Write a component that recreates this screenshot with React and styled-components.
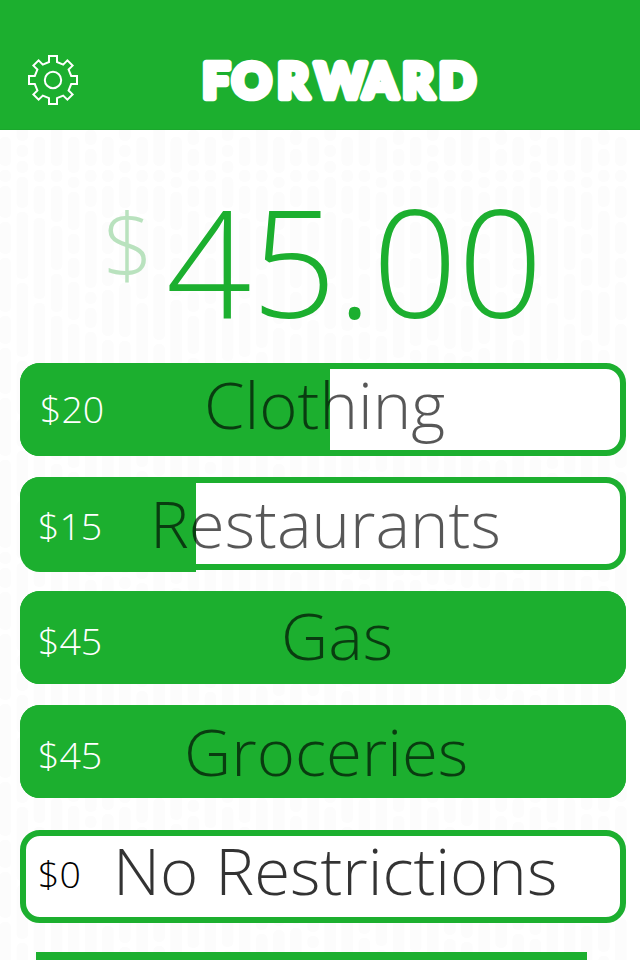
import React from "react";
import styled, { createGlobalStyle } from "styled-components";

const GREEN = "#1caf2f";

const Global = createGlobalStyle`
  * { box-sizing: border-box; }
  html, body { margin: 0; padding: 0; background: #fff; }
`;

const Screen = styled.main`
  position: relative;
  isolation: isolate;
  width: 640px;
  height: 960px;
  overflow: hidden;
  display: flex;
  flex-direction: column;
  font-family: "Open Sans", sans-serif;
  font-weight: 300;
`;

const Texture = styled.svg`
  position: absolute;
  inset: 0;
  z-index: -1;
`;

const Header = styled.header`
  flex: none;
  height: 130px;
  padding: 30px 0 0 28px;
  display: flex;
  align-items: center;
  background: ${GREEN};
  border-bottom: 1px solid #1aa82c;
`;

const SettingsButton = styled.button`
  width: 50px;
  height: 50px;
  padding: 0;
  border: 0;
  background: none;
  display: block;
  svg { display: block; }
`;

const Wordmark = styled.svg`
  margin-left: 118px;
  overflow: visible;
  font-family: Lato, sans-serif;
  font-weight: 900;
  font-size: 48px;
`;

const Balance = styled.section`
  flex: none;
  height: 233px;
  padding-left: 103px;
  display: flex;
  align-items: flex-start;
  color: ${GREEN};
`;

const Currency = styled.span`
  width: 63px;
  padding-top: 55px;
  font-size: 88px;
  line-height: 117px;
  color: #b9e2be;
`;

const Amount = styled.span`
  padding-top: 28px;
  font-size: 149.5px;
  line-height: 204px;
`;

const List = styled.ul`
  list-style: none;
  margin: 0;
  padding: 0 0 0 20px;
  display: flex;
  flex-direction: column;
`;

const Row = styled.li`
  flex: none;
  width: 606px;
  height: 93px;
  margin-bottom: ${(p) => p.$gap}px;
  border: 6px solid ${GREEN};
  border-radius: 20px;
  display: grid;
  align-items: start;
  background: #fff;
  > * { grid-area: 1 / 1; }
`;

const Fill = styled.div`
  width: ${(p) => p.$width}px;
  height: ${(p) => p.$height}px;
  margin: -6px;
  background: ${GREEN};
  border-radius: ${(p) => (p.$full ? "20px" : "20px 0 0 20px")};
`;

const Price = styled.span`
  padding-left: ${(p) => p.$x}px;
  margin-top: ${(p) => p.$y}px;
  font-size: 37.5px;
  line-height: 54px;
  color: ${(p) => (p.$dark ? "#000" : "#fff")};
`;

const Label = styled.span`
  padding-left: ${(p) => p.$x}px;
  margin-top: ${(p) => p.$y}px;
  font-size: 65.3px;
  line-height: 90px;
  white-space: nowrap;
  color: rgba(0, 0, 0, ${(p) => p.$alpha});
`;

const NextRow = styled.div`
  flex: none;
  width: 551px;
  height: 8px;
  margin-left: 36px;
  background: ${GREEN};
`;

const rows = [
  { name: "Clothing", price: "$20", fill: 310, h: 93, px: 14, py: 13, x: 178, y: -10, alpha: 0.66, gap: 21 },
  { name: "Restaurants", price: "$15", fill: 176, h: 95, px: 12, py: 16, x: 124, y: -5, alpha: 0.66, gap: 21 },
  { name: "Gas", price: "$45", fill: 606, h: 93, px: 12, py: 17, x: 255, y: -7, alpha: 0.66, gap: 21 },
  { name: "Groceries", price: "$45", fill: 606, h: 93, px: 12, py: 17, x: 158, y: -5, alpha: 0.66, gap: 32 },
  { name: "No Restrictions", price: "$0", fill: 0, h: 0, px: 12, py: 11, x: 87, y: -11, alpha: 0.8, gap: 29 },
];

// Dash start positions at the top of each column, repeated every six columns.
const starts = [
  [137, 170, 186, 222, 258], [125, 145, 161, 177, 212, 283],
  [137, 170, 186, 218, 303], [122, 170, 186, 226, 274],
  [137, 177, 192, 234, 258], [130, 149, 170, 186, 211, 292],
];
const lengths = [54, 38, 88, 28, 66, 12, 46, 74, 20, 58];
const dashes = [];
for (let c = 0; c < 37; c++) {
  const s = [...starts[c % 6]];
  for (let n = 0; s[s.length - 1] < 960; n++) {
    s.push(s[s.length - 1] + lengths[(c * 7 + n * 3 + Math.floor(c / 6)) % 10] + 4);
  }
  for (let i = 0; i + 1 < s.length; i++) {
    dashes.push({ x: c * 17.1 - 0.5, y: s[i], h: Math.max(10, s[i + 1] - s[i] - 4) });
  }
}

function Gear() {
  return (
    <svg width="50" height="50" viewBox="0 0 50 50" fill="none" stroke="#fff" strokeWidth="2">
      <path d="M21 1H29V7L35.2 9.6L39.4 5.4L44.6 10.6L40.6 14.6L43.2 21H49V29H43.2L40.6 35.4L44.6 39.4L39.4 44.6L35.2 40.6L29 43.2V49H21V43.2L14.8 40.6L10.6 44.6L5.4 39.4L9.4 35.4L6.8 29H1V21H6.8L9.4 14.6L5.4 10.6L10.6 5.4L14.8 9.6L21 7Z" />
      <circle cx="25" cy="25" r="8.2" />
    </svg>
  );
}

export default function App() {
  return (
    <>
      <Global />
      <Screen>
        <Texture width="640" height="960" fill="#fcfcfc" aria-hidden="true">
          {dashes.map((d, i) => (
            <rect key={i} x={d.x} y={d.y} width="11.5" height={d.h} rx="5" />
          ))}
        </Texture>
        <Header>
          <SettingsButton aria-label="Settings"><Gear /></SettingsButton>
          <Wordmark width="290" height="80" viewBox="196 40 290 80" fill="#fff" stroke="#fff" strokeWidth="6.5" strokeLinejoin="round" role="img">
            <text y="97.8" x="202.5 232.3 277.5 315 363.5 402.5 439">FORWARD</text>
          </Wordmark>
        </Header>
        <Balance>
          <Currency>$</Currency>
          <Amount>45.00</Amount>
        </Balance>
        <List>
          {rows.map((r) => (
            <Row key={r.name} $gap={r.gap}>
              {r.fill > 0 && <Fill $width={r.fill} $height={r.h} $full={r.fill === 606} />}
              <Price $x={r.px} $y={r.py} $dark={!r.fill}>{r.price}</Price>
              <Label $x={r.x} $y={r.y} $alpha={r.alpha}>{r.name}</Label>
            </Row>
          ))}
        </List>
        <NextRow />
      </Screen>
    </>
  );
}
